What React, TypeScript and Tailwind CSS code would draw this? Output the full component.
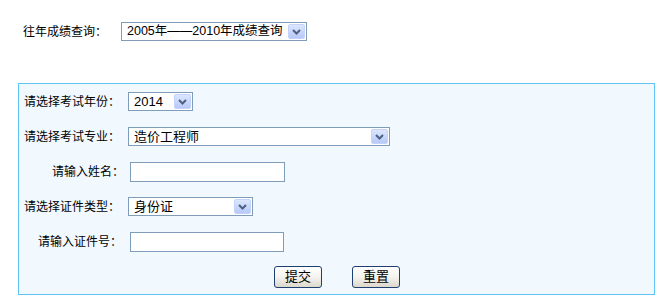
import React from "react"

const FONT = { fontFamily: '"Liberation Sans", "Noto Sans CJK SC", sans-serif' }

function Arrow() {
  return (
    <span className="absolute right-[1px] top-[1px] bottom-[1px] w-[17px] flex items-center justify-center rounded-[2px] border border-[#c3d3fd] bg-gradient-to-b from-[#dce6fd] to-[#b6c9f7]">
      <svg width="9" height="6" viewBox="0 0 9 6">
        <path d="M1 1 L4.5 4.5 L8 1" fill="none" stroke="#4d6185" strokeWidth="2" />
      </svg>
    </span>
  )
}

function FakeSelect({ value, width, size = "text-[13px]" }: { value: string; width: string; size?: string }) {
  return (
    <div className={`relative h-[19px] ${width} border border-[#7f9db9] bg-white ${size} leading-[17px] pl-[5px] text-black whitespace-nowrap overflow-hidden`}>
      {value}
      <Arrow />
    </div>
  )
}

function TextBox({ width }: { width: string }) {
  return <div className={`h-[20px] ${width} ml-[2px] border border-[#7f9db9] bg-white`} />
}

function Row({ label, pad, children }: { label: string; pad: string; children: React.ReactNode }) {
  return (
    <div className="flex items-center h-[35px]">
      <div className={`w-[109px] text-[12px] text-black whitespace-nowrap ${pad}`}>{label}</div>
      {children}
    </div>
  )
}

function Btn({ text }: { text: string }) {
  return (
    <button className="h-[22px] w-[48px] rounded-[3px] border border-[#1f3f70] bg-gradient-to-b from-white via-[#f4f3ee] to-[#dcd8cc] text-[13px] leading-[20px] text-black">
      {text}
    </button>
  )
}

export default function App() {
  return (
    <div className="w-[671px] h-[306px] bg-white pl-[18px] pt-[22px]" style={FONT}>
      <div className="flex items-center h-[19px] pl-[5px]">
        <span className="text-[12px] text-black w-[98px]">往年成绩查询：</span>
        <FakeSelect value="2005年——2010年成绩查询" width="w-[186px]" size="text-[12.5px]" />
      </div>

      <div className="mt-[42px] w-[637px] h-[212px] border border-[#5ec4f5] bg-[#f2f9fe]">
        <Row label="请选择考试年份：" pad="pl-[5px]">
          <FakeSelect value="2014" width="w-[65px]" />
        </Row>
        <Row label="请选择考试专业：" pad="pl-[5px]">
          <FakeSelect value="造价工程师" width="w-[262px]" />
        </Row>
        <Row label="请输入姓名：" pad="pl-[33px]">
          <TextBox width="w-[155px]" />
        </Row>
        <Row label="请选择证件类型：" pad="pl-[5px]">
          <FakeSelect value="身份证" width="w-[125px]" />
        </Row>
        <Row label="请输入证件号：" pad="pl-[19px]">
          <TextBox width="w-[154px]" />
        </Row>
        <div className="flex items-center h-[35px] pl-[255px] gap-[30px]">
          <Btn text="提交" />
          <Btn text="重置" />
        </div>
      </div>
    </div>
  )
}
